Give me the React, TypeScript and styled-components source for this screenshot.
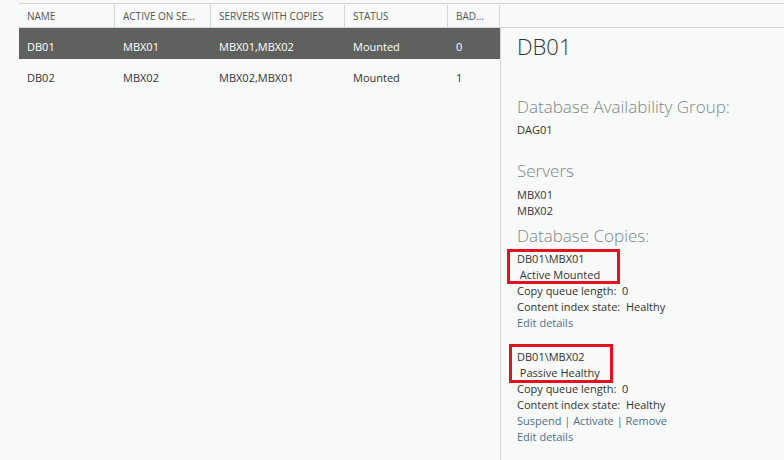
import React from 'react';
import styled, { createGlobalStyle } from 'styled-components';

const GlobalStyle = createGlobalStyle`
  html, body {
    margin: 0;
    padding: 0;
    background: #f7faf8;
  }
  body {
    font-family: "Open Sans", "Noto Sans", sans-serif;
    color: #333;
  }
`;

type Row = {
  name: string;
  active: string;
  servers: string;
  status: string;
  bad: string;
};

const rows: Row[] = [
  { name: 'DB01', active: 'MBX01', servers: 'MBX01,MBX02', status: 'Mounted', bad: '0' },
  { name: 'DB02', active: 'MBX02', servers: 'MBX02,MBX01', status: 'Mounted', bad: '1' },
];

const columns = [
  { label: 'NAME', width: 96 },
  { label: 'ACTIVE ON SE...', width: 96 },
  { label: 'SERVERS WITH COPIES', width: 134 },
  { label: 'STATUS', width: 103 },
  { label: 'BAD...', width: 52 },
];

const App = () => {
  return (
    <>
      <GlobalStyle />
      <Page>
        <ListPane>
          <HeaderRow>
            {columns.map((c) => (
              <HeaderCell key={c.label} $width={c.width}>{c.label}</HeaderCell>
            ))}
          </HeaderRow>
          {rows.map((r, i) => (
            <DataRow key={r.name} $selected={i === 0}>
              <Cell $width={columns[0].width}>{r.name}</Cell>
              <Cell $width={columns[1].width}>{r.active}</Cell>
              <Cell $width={columns[2].width}>{r.servers}</Cell>
              <Cell $width={columns[3].width}>{r.status}</Cell>
              <Cell $width={columns[4].width}>{r.bad}</Cell>
            </DataRow>
          ))}
        </ListPane>
        <DetailPane>
          <DetailHeader />
          <DetailBody>
            <Title>DB01</Title>
            <SectionTitle $top={35}>Database Availability Group:</SectionTitle>
            <Value $top={3}>DAG01</Value>
            <SectionTitle $top={21}>Servers</SectionTitle>
            <Value $top={4}>MBX01</Value>
            <Value>MBX02</Value>
            <SectionTitle $top={5}>Database Copies:</SectionTitle>

            <Copy $top={3}>
              <Marked $left={-10} $top={-2} $width={113} $height={35} />
              <Value>DB01\MBX01</Value>
              <Value>&nbsp;Active Mounted</Value>
              <Value>Copy queue length:&nbsp; 0</Value>
              <Value>Content index state:&nbsp; Healthy</Value>
              <Action>Edit details</Action>
            </Copy>

            <Copy $top={18}>
              <Marked $left={-8} $top={-5} $width={104} $height={39} />
              <Value>DB01\MBX02</Value>
              <Value>&nbsp;Passive Healthy</Value>
              <Value>Copy queue length:&nbsp; 0</Value>
              <Value>Content index state:&nbsp; Healthy</Value>
              <Action>Suspend | Activate | Remove</Action>
              <Action>Edit details</Action>
            </Copy>
          </DetailBody>
        </DetailPane>
      </Page>
    </>
  );
};

// --- Styled Components ---
const Page = styled.div`
  display: flex;
  height: 460px;
  width: 784px;
  padding-top: 3px;
  box-sizing: border-box;
  overflow: hidden;
`;

const ListPane = styled.div`
  margin-left: 19px;
  width: 481px;
  display: flex;
  flex-direction: column;
`;

const HeaderRow = styled.div`
  display: flex;
  align-items: flex-end;
  height: 25px;
  box-sizing: border-box;
  border-top: 1px solid #d2d6d4;
  border-bottom: 1px solid #d2d6d4;
`;

const HeaderCell = styled.div<{ $width: number }>`
  width: ${(p) => p.$width}px;
  height: 22px;
  box-sizing: border-box;
  padding: 4px 0 0 8px;
  font-size: 10px;
  line-height: 14px;
  color: #555;
  border-right: 1px solid #d2d6d4;
  white-space: nowrap;
  overflow: hidden;
`;

const DataRow = styled.div<{ $selected?: boolean }>`
  display: flex;
  align-items: center;
  height: 31px;
  box-sizing: border-box;
  padding-top: 5px;
  background: ${(p) => (p.$selected ? '#5f615e' : 'transparent')};
  color: ${(p) => (p.$selected ? '#ffffff' : '#333')};
`;

const Cell = styled.div<{ $width: number }>`
  width: ${(p) => p.$width}px;
  box-sizing: border-box;
  padding-left: 8px;
  font-size: 11px;
  white-space: nowrap;
`;

const DetailPane = styled.div`
  flex: 1;
  display: flex;
  flex-direction: column;
`;

const DetailHeader = styled.div`
  height: 25px;
  box-sizing: border-box;
  border-top: 1px solid #d2d6d4;
  border-bottom: 1px solid #d2d6d4;
`;

const DetailBody = styled.div`
  flex: 1;
  border-left: 1px solid #d2d6d4;
  padding: 4px 0 0 16px;
`;

const Title = styled.div`
  font-size: 22px;
  font-weight: 300;
  color: #333;
  line-height: 28px;
`;

const SectionTitle = styled.div<{ $top: number }>`
  margin-top: ${(p) => p.$top}px;
  font-size: 17px;
  font-weight: 300;
  color: #80868a;
  line-height: 24px;
`;

const Value = styled.div<{ $top?: number }>`
  margin-top: ${(p) => p.$top ?? 0}px;
  font-size: 11px;
  line-height: 16px;
  color: #333;
  white-space: pre;
`;

const Action = styled.div`
  font-size: 11px;
  line-height: 16px;
  color: #4e6e8e;
`;

const Copy = styled.div<{ $top?: number }>`
  position: relative;
  margin-top: ${(p) => p.$top ?? 0}px;
`;

const Marked = styled.div<{ $left: number; $top: number; $width: number; $height: number }>`
  position: absolute;
  left: ${(p) => p.$left}px;
  top: ${(p) => p.$top}px;
  width: ${(p) => p.$width}px;
  height: ${(p) => p.$height}px;
  border: 3px solid #e2131f;
  box-sizing: border-box;
`;

export default App;
